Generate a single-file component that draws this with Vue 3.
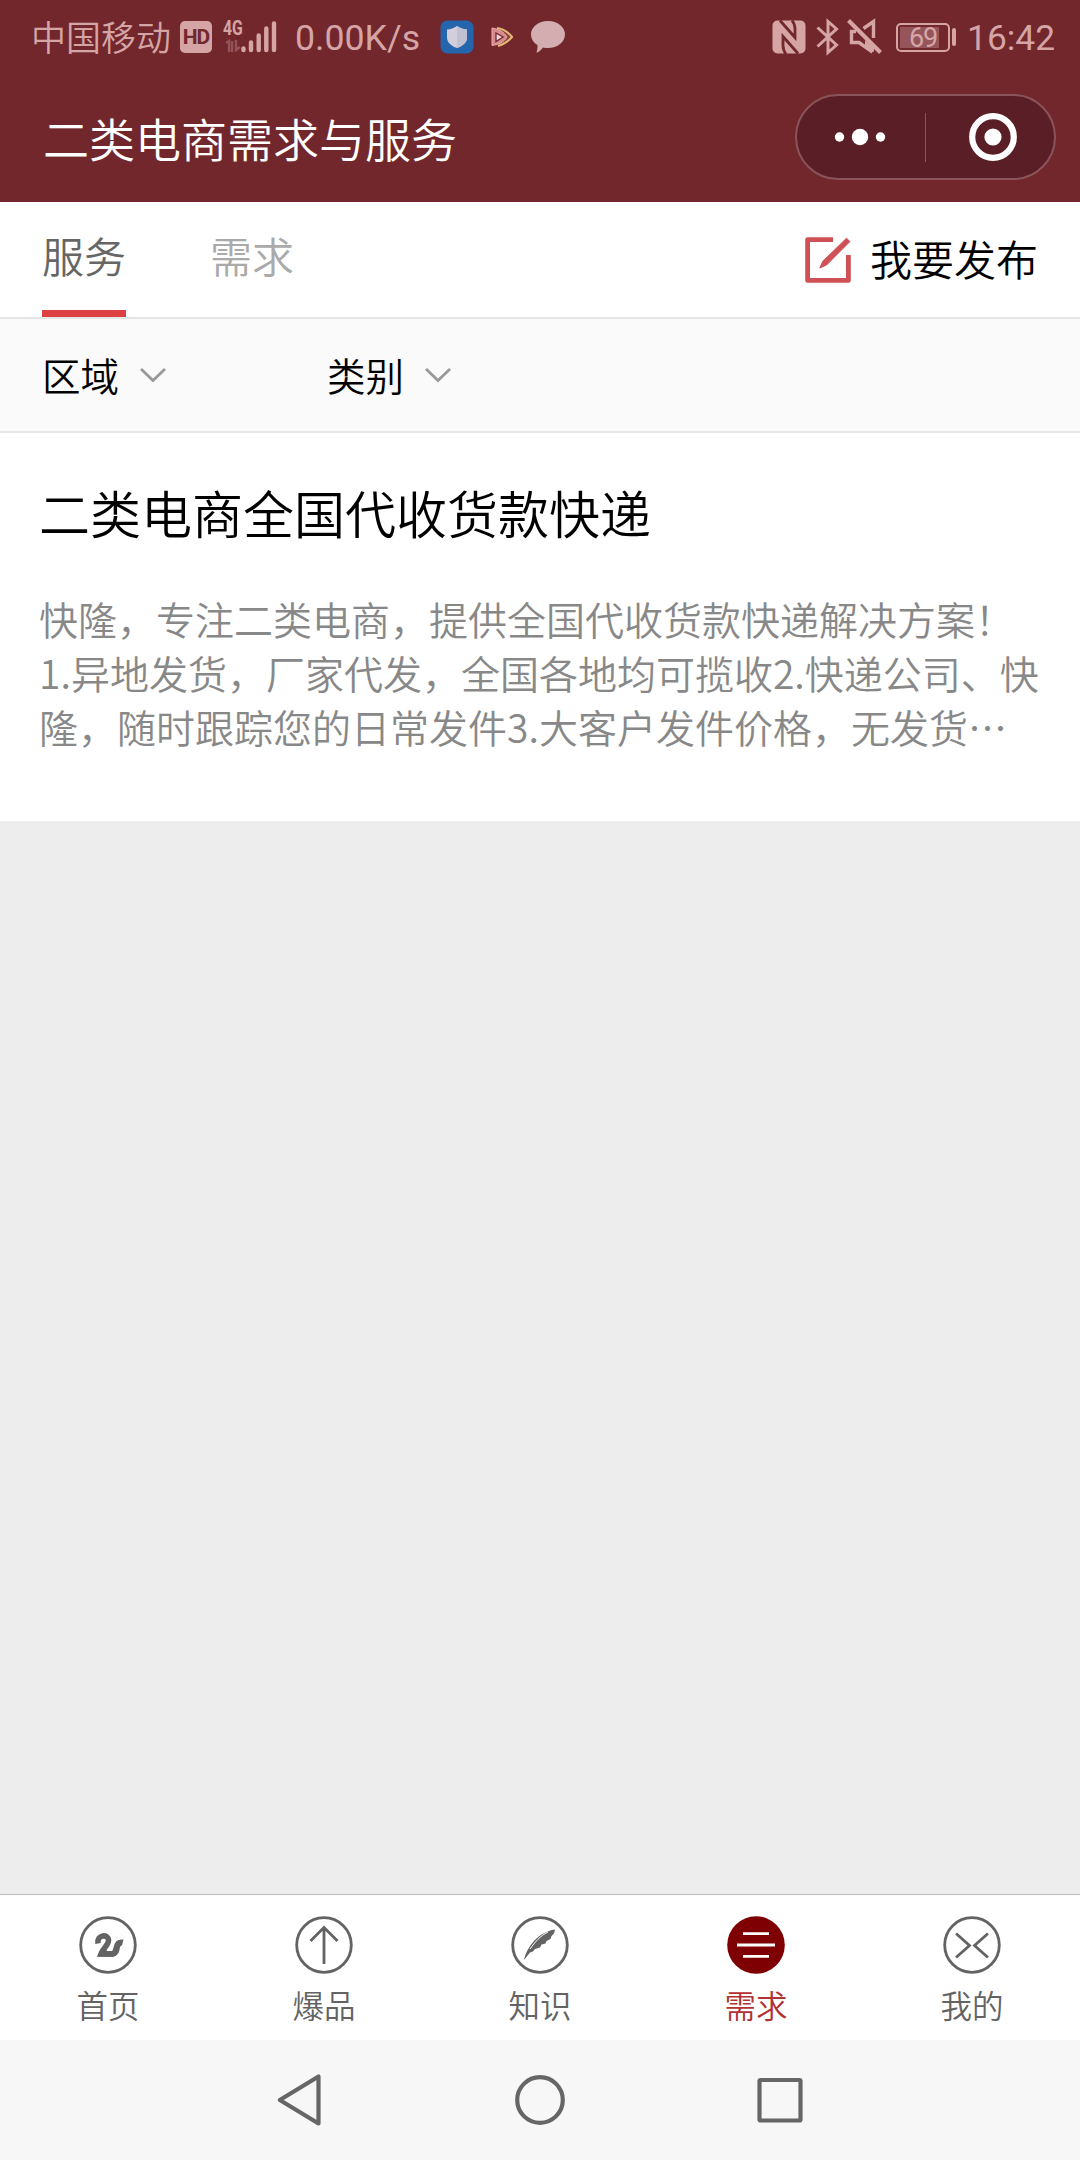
<template>
  <div class="page">
    <header class="header">
      <div class="status">
        <span class="carrier">中国移动</span>
        <span class="hd">HD</span>
        <div class="signal">
          <span class="net">4G</span>
          <svg width="54" height="36" viewBox="0 0 54 36">
            <g fill="none" stroke="#93535a" stroke-width="2.4">
              <path d="M3 24l3-2v11M9 22v11M13 21v10l4-3" />
            </g>
            <g stroke="#d5a5a6" stroke-width="4.4" stroke-linecap="round">
              <path d="M20.5 29.5v1.5M28 23.5v7.5M35.7 16.5v14.5M43.3 9.5v21.5M51 4.5v26.5" />
            </g>
          </svg>
        </div>
        <span class="speed">0.00K/s</span>
        <svg class="shield" width="34" height="34" viewBox="0 0 34 34">
          <rect x="0.5" y="0.5" width="33" height="33" rx="7" fill="#2465ad" />
          <path d="M17 6c3.500 2.600 6.500 3.200 10 3.400v8c0 5-4 8.200-10 10.600-6-2.400-10-5.600-10-10.600v-8c3.500-.2 6.500-.8 10-3.400z" fill="#d3cedb" />
          <path d="M17 6c3.500 2.600 6.500 3.200 10 3.400v8c0 5-4 8.200-10 10.600z" fill="#bfc0d2" />
        </svg>
        <svg class="player" width="24" height="22" viewBox="0 0 24 22">
          <path d="M7 2c5 .5 11 4 15 9-4 4.500-8 7.500-14 9" fill="#86403b" stroke="#e5b573" stroke-width="2.2" stroke-linejoin="round" />
          <path d="M2 2c7 1 12 4 15 9-3 5-8 7.500-15 8.500z" fill="#d8898c" stroke="#e5b0a8" stroke-width="1" stroke-linejoin="round" />
          <path d="M6 7l7 4-7 4.500z" fill="#f4dddd" stroke="#6e2630" stroke-width="1.3" />
        </svg>
        <svg class="bubble" width="36" height="34" viewBox="0 0 36 34">
          <path d="M18 1c9.600 0 17 6 17 13.500S27.600 28 18 28c-1.800 0-3.400-.2-5-.6-1.800 2.400-4.200 4.400-6.600 5.300.9-2.400 1.300-5 1-7.700C3.500 22.600 1 18.800 1 14.500 1 7 8.400 1 18 1z" fill="#d3adb0" />
        </svg>

        <div class="status-right">
          <svg width="34" height="34" viewBox="0 0 34 34">
            <rect x="0.5" y="0.5" width="33" height="33" rx="5" fill="#d5a5a6" />
            <path d="M8 0.5L23 17.500V9c0-3.500-1-6-3-8.500M26 33.500L11 16.500v9c0 3.500 1 6 3 8.500" fill="none" stroke="#72272d" stroke-width="2.8" />
          </svg>
          <svg class="bt" width="24" height="36" viewBox="0 0 24 36">
            <path d="M1.500 8.500l19 17.500-8.500 7.500v-31l8.500 7.500-19 17.500" fill="none" stroke="#d5a5a6" stroke-width="3" />
          </svg>
          <svg class="mute" width="36" height="36" viewBox="0 0 36 36">
            <path d="M9 12.500H4.500v11H12L25.500 33M16.500 9.500L26.500 2.500V19" fill="none" stroke="#d5a5a6" stroke-width="3.4" />
            <path d="M1.500 1.500L33.500 33.500" stroke="#d5a5a6" stroke-width="4" />
            <path d="M18 21v7l9 5v-4z" fill="#d5a5a6" />
          </svg>
          <div class="battery">
            <i class="level" :style="{ width: battery * 0.56 + 'px' }"></i>
            <b>{{ battery }}</b>
          </div>
          <i class="nub"></i>
          <span class="time">16:42</span>
        </div>
      </div>

      <div class="navbar">
        <h1>二类电商需求与服务</h1>
        <div class="capsule">
          <svg width="44" height="18" viewBox="0 0 44 18" fill="#fff">
            <circle cx="4.500" cy="9" r="4.700" />
            <circle cx="25" cy="9" r="8.200" />
            <circle cx="45.500" cy="9" r="4.700" />
          </svg>
          <i class="split"></i>
          <svg class="ring" width="48" height="48" viewBox="0 0 48 48">
            <circle cx="24" cy="24" r="20.800" fill="none" stroke="#fff" stroke-width="6.200" />
            <circle cx="24" cy="24" r="8.600" fill="#fff" />
          </svg>
        </div>
      </div>
    </header>

    <div class="tabs">
      <div
        v-for="(tab, i) in tabs"
        :key="tab"
        class="tab"
        :class="{ active: i === currentTab }"
        @click="currentTab = i"
      >
        {{ tab }}
      </div>
      <div class="publish">
        <svg width="46" height="46" viewBox="0 0 46 46">
          <path d="M28 2.600H2.600v40.800h40.800V18" fill="none" stroke="#cf5156" stroke-width="4.800" stroke-linejoin="round" />
          <path d="M41.500 1.200l3.400 3.400L21.500 28l-6.700 3 3-6.700z" fill="#cf5156" stroke="#cf5156" stroke-linejoin="round" />
        </svg>
        <span>我要发布</span>
      </div>
    </div>

    <div class="filters">
      <div v-for="item in filters" :key="item" class="filter">
        <span>{{ item }}</span>
        <svg width="28" height="16" viewBox="0 0 28 16">
          <path d="M2 2l12 11.500L26 2" fill="none" stroke="#999" stroke-width="2.8" />
        </svg>
      </div>
    </div>

    <div class="card">
      <h2>二类电商全国代收货款快递</h2>
      <p v-for="line in desc" :key="line">{{ line }}</p>
    </div>

    <div class="blank"></div>

    <div class="tabbar">
      <div
        v-for="item in menus"
        :key="item.icon"
        class="menu"
        :class="{ on: item.icon === 'need' }"
      >
        <svg width="60" height="60" viewBox="0 0 60 60" fill="none" stroke="#636363" stroke-width="2.8">
          <circle v-if="item.icon !== 'need'" cx="30" cy="30" r="27.3" />
          <template v-if="item.icon === 'home'">
            <path d="M20 28.500c-1.500-9 10.500-10 10.500-3 0 4.500-5.500 8-7.500 13.500h10.500c7 0 2.500-11.500 9-11.500" stroke-width="5.6" />
            <path d="M19.500 41.800l6.500-9.800 3 4h6l-2 5.800z" fill="#636363" stroke="none" />
            <path d="M37 30c1-4 4-5.500 8.500-5.500l-1.500 6c-2 0-2 1.500-2.500 4.500-1 4-3.500 6.800-8.500 6.800v-5c3 0 3.500-3 4-6.800z" fill="#636363" stroke="none" />
          </template>
          <path v-else-if="item.icon === 'hot'" d="M30 12v37M16.500 26L30 12.500 43.500 26" />
          <template v-else-if="item.icon === 'know'">
            <path d="M14 45c3-13 14-28 31-30.500-.5 4-2 5-3.500 6.500l-1 3-4 2-1 2.500-4 1-1.500 3-5 1.500-2 2.500-3 1z" fill="#636363" stroke="none" />
            <path d="M20 34c5-7 10-13 18-17" stroke="#fff" stroke-width="1" />
          </template>
          <template v-else-if="item.icon === 'need'">
            <circle cx="30" cy="30" r="28.8" fill="#7e0002" stroke="none" />
            <path d="M17 18.700h26M11 30h38M17 41.300h26" stroke="#fff" />
          </template>
          <path v-else d="M14 18.500l13.500 12L14 42.500M46 18.500l-13.500 12L46 42.500" />
        </svg>
        <span>{{ item.text }}</span>
      </div>
    </div>

    <div class="sysnav">
      <svg width="46" height="54" viewBox="0 0 46 54">
        <path d="M41.500 3.500v47L2.800 27z" />
      </svg>
      <svg width="54" height="54" viewBox="0 0 54 54">
        <circle cx="27" cy="27" r="22.800" />
      </svg>
      <svg width="48" height="54" viewBox="0 0 48 54">
        <rect x="3.500" y="7" width="41" height="40.500" rx="1" />
      </svg>
    </div>
  </div>
</template>

<script setup>
import { ref } from 'vue'

const battery = ref(69)
const tabs = ['服务', '需求']
const currentTab = ref(0)
const filters = ['区域', '类别']

const desc = [
  '快隆，专注二类电商，提供全国代收货款快递解决方案！',
  '1.异地发货，厂家代发，全国各地均可揽收2.快递公司、快',
  '隆，随时跟踪您的日常发件3.大客户发件价格，无发货⋯',
]

const menus = [
  { icon: 'home', text: '首页' },
  { icon: 'hot', text: '爆品' },
  { icon: 'know', text: '知识' },
  { icon: 'need', text: '需求' },
  { icon: 'mine', text: '我的' },
]
</script>

<style>
body {
  background: #ededed;
}
</style>

<style scoped>
.page {
  display: flex;
  flex-direction: column;
  width: 1080px;
  height: 2160px;
  overflow: hidden;
  font-family: 'Noto Sans CJK SC', sans-serif;
  font-weight: 350;
  color: #000;
}

svg {
  display: block;
  flex: none;
  overflow: visible;
}

.header {
  height: 202px;
  background: #72272d;
}

.status {
  display: flex;
  align-items: center;
  height: 74px;
  padding: 0 25px 0 31px;
  color: #d5a5a6;
  white-space: nowrap;
}

.carrier {
  margin-top: -2px;
  font-size: 35px;
  line-height: 40px;
}

.hd {
  width: 32px;
  height: 32px;
  margin-left: 9px;
  border-radius: 5px;
  background: #d5a5a6;
  color: #72272d;
  font: bold 21px/32px Roboto, sans-serif;
  text-align: center;
  letter-spacing: -1px;
}

.signal {
  position: relative;
  margin-left: 11px;
}

.net {
  position: absolute;
  top: 0;
  left: 0;
  font: bold 21px/18px Roboto, sans-serif;
  transform: scaleX(0.75);
  transform-origin: left;
}

.speed {
  margin: 2px 0 0 18px;
  font: 35.700px/40px Roboto, sans-serif;
}

.shield {
  margin-left: 20px;
}

.player {
  margin-left: 16px;
}

.bubble {
  margin-left: 16px;
}

.status-right {
  display: flex;
  align-items: center;
  margin-left: auto;
}

.bt {
  margin-left: 10px;
}

.mute {
  margin-left: 7px;
}

.battery {
  position: relative;
  box-sizing: border-box;
  width: 54px;
  height: 29px;
  margin-left: 13px;
  border: 2px solid #d5a5a6;
  border-radius: 5px;
  font: 27px/26px Roboto, sans-serif;
  text-align: center;
}

.battery b {
  position: relative;
  font-weight: 400;
  letter-spacing: -1px;
}

.level {
  position: absolute;
  top: 2px;
  left: 2px;
  height: 21px;
  background: #95555b;
}

.nub {
  width: 4px;
  height: 18px;
  margin-left: 2px;
  border-radius: 2px;
  background: #d5a5a6;
}

.time {
  margin: 2px 0 0 11px;
  font: 35.300px/40px Roboto, sans-serif;
}

.navbar {
  display: flex;
  align-items: center;
  justify-content: space-between;
  height: 126px;
  padding: 0 24px 0 43px;
}

h1 {
  margin: 0 0 1px;
  color: #fff;
  font-size: 46px;
  font-weight: 350;
  line-height: 60px;
}

.capsule {
  display: flex;
  align-items: center;
  box-sizing: border-box;
  width: 261px;
  height: 86px;
  padding-left: 38px;
  border: 2px solid #8a545a;
  border-radius: 43px;
  background: #5a1f26;
}

.split {
  width: 1px;
  height: 49px;
  margin-left: 46px;
  background: #8a545a;
}

.ring {
  margin-left: 43px;
}

.tabs {
  display: flex;
  height: 115px;
  padding: 0 42px;
  border-bottom: 2px solid #e5e5e5;
  background: #fff;
}

.tab {
  box-sizing: border-box;
  height: 115px;
  margin-right: 84px;
  border-bottom: 7px solid transparent;
  color: #aaa;
  font-size: 42px;
  line-height: 105px;
}

.tab.active {
  border-color: #dd3f43;
  color: #666;
}

.publish {
  display: flex;
  align-items: center;
  gap: 19px;
  margin-left: auto;
  font-size: 42px;
}

.publish span {
  margin-bottom: 4px;
  line-height: 60px;
}

.filters {
  display: flex;
  height: 112px;
  padding-left: 42px;
  border-bottom: 2px solid #e8e8e8;
  background: #fafafa;
}

.filter {
  display: flex;
  align-items: center;
  gap: 20px;
  width: 285px;
  font-size: 38.500px;
}

.filter span {
  margin-bottom: 3px;
  line-height: 60px;
}

.card {
  box-sizing: border-box;
  height: 388px;
  padding: 45px 0 0 39px;
  background: #fff;
}

h2 {
  margin: 0 0 45px;
  font-size: 51px;
  font-weight: 350;
  line-height: 68px;
}

p {
  margin: 0;
  color: #888;
  font-size: 39px;
  line-height: 54px;
  white-space: nowrap;
}

.blank {
  flex: 1;
  background: #ededed;
}

.tabbar {
  display: flex;
  height: 145px;
  border-top: 1px solid #bcbcbc;
  background: #fff;
}

.menu {
  display: flex;
  flex: 1;
  flex-direction: column;
  align-items: center;
  padding-top: 20px;
  color: #636363;
  font-size: 31.500px;
  line-height: 40px;
}

.menu span {
  margin-top: 9px;
}

.menu.on {
  color: #b13134;
}

.sysnav {
  display: flex;
  align-items: center;
  justify-content: space-between;
  box-sizing: border-box;
  height: 120px;
  padding: 0 276px 0 277px;
  background: #f7f7f7;
}

.sysnav svg {
  fill: none;
  stroke: #666;
  stroke-width: 4.200;
  stroke-linejoin: round;
}
</style>
